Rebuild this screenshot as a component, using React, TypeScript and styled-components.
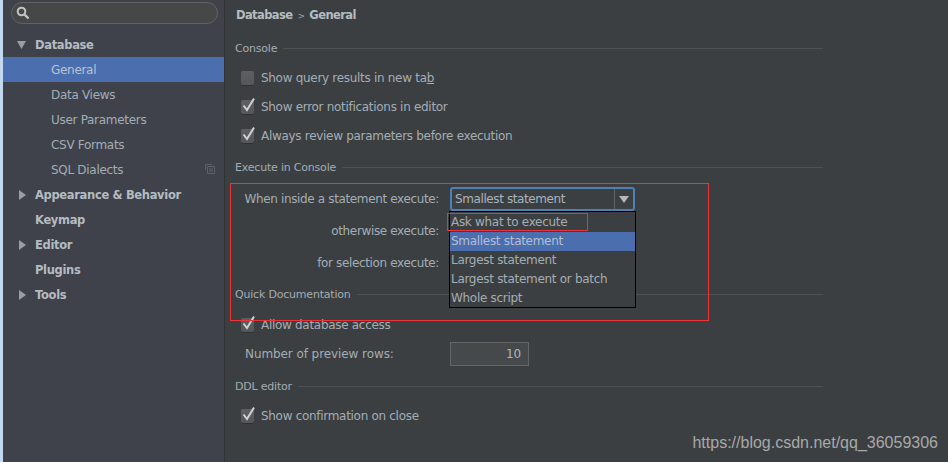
import React from "react";
import styled, { createGlobalStyle } from "styled-components";

const Global = createGlobalStyle`
  html, body { margin: 0; padding: 0; background: #3c3f41; }
  #root { width: 948px; height: 462px; overflow: hidden; }
  * { box-sizing: border-box; }
`;

const Page = styled.div`
  width: 948px; height: 462px; display: flex; position: relative;
  font-family: "DejaVu Sans", Verdana, sans-serif; font-size: 12px; letter-spacing: -0.3px; color: #a9b3bd;
`;
const Strip = styled.div`width: 3px; background: #c4d9f1; flex: none;`;
const Sidebar = styled.aside`
  width: 222px; flex: none; background: #3f424a; border-right: 1px solid #303235;
  padding-top: 2px; display: flex; flex-direction: column;
`;
const SearchBox = styled.div`
  margin: 0 6px 0 8px; height: 22px; border: 1px solid #5f6364; border-radius: 11px;
  background: #454846; display: flex; align-items: center; padding-left: 4px;
`;
const Tree = styled.div`margin-top: 8px; display: flex; flex-direction: column;`;
const TreeRow = styled.div<{ $sel?: boolean; $bold?: boolean; $child?: boolean }>`
  height: 25px; display: flex; align-items: center; position: relative;
  padding-left: ${p => (p.$child ? 48 : 32)}px;
  background: ${p => (p.$sel ? "#4b6eaf" : "transparent")};
  color: ${p => (p.$sel ? "#b9c4d3" : p.$bold ? "#b4bcc2" : "#a3adb6")};
  font-weight: ${p => (p.$bold ? 700 : 400)};
  ${p => p.$bold && "font-size: 11.5px; letter-spacing: -0.33px;"}
`;
const Arrow = styled.svg<{ $left: number }>`position: absolute; left: ${p => p.$left}px; top: 8px;`;
const CopyIcon = styled.svg`position: absolute; right: 9px; top: 7px;`;

const Main = styled.main`flex: 1; padding: 6px 125px 0 10px; background: #3c3f41; display: flex; flex-direction: column;`;
const Crumb = styled.div`
  height: 17px; display: flex; align-items: center; font-weight: 700; font-size: 11.5px; letter-spacing: -0.6px;
  color: #b4bcc2; gap: 5px; margin-left: 1px;
`;
const Sep = styled.span`font-weight: 400; font-size: 9px; color: #9aa3aa; padding-top: 2px;`;
const Section = styled.div<{ $mt: number }>`
  margin-top: ${p => p.$mt}px; height: 18px; display: flex; align-items: center; gap: 6px; color: #a3acb3; font-size: 11px;
  letter-spacing: -0.2px;
  &::after { content: ""; flex: 1; height: 1px; background: #4f5254; }
`;
const CheckRow = styled.div<{ $mt: number }>`
  margin-top: ${p => p.$mt}px; height: 18px; padding-left: 6px; display: flex; align-items: center; gap: 7px; color: #a3adb6;
  u { text-underline-offset: 1px; }
`;
const Box = styled.span`
  width: 13px; height: 14px; flex: none; border-radius: 2px; position: relative;
  background: linear-gradient(#5d5f60, #545657); box-shadow: 0 1px 0 #2f3132;
`;
const Tick = styled.svg`position: absolute; left: 0; top: -3px;`;
const FormRow = styled.div<{ $mt: number }>`
  margin-top: ${p => p.$mt}px; height: 26px; display: grid; grid-template-columns: 204px auto; column-gap: 11px; align-items: center;
`;
const FormLabel = styled.span`text-align: right; color: #a3adb6; white-space: nowrap; letter-spacing: -0.36px;`;
const Combo = styled.div`
  width: 185px; height: 24px; border: 2px solid #4d80b5; border-radius: 3px; display: flex; align-items: center;
  background: #3c3f41; padding-left: 3px; color: #a9b3bd; letter-spacing: -0.4px;
`;
const ComboText = styled.span`flex: 1;`;
const ComboBtn = styled.span`
  width: 19px; height: 100%; border-left: 1px solid #616466; display: flex; align-items: center; justify-content: center;
`;
const Popup = styled.div`
  position: absolute; left: 449px; top: 211px; width: 187px; height: 97px;
  border: 1px solid #000; background: #3c3f41; padding-top: 1px; display: flex; flex-direction: column;
`;
const PopItem = styled.div<{ $sel?: boolean }>`
  height: 19px; padding-left: 1px; line-height: 19px; color: ${p => (p.$sel ? "#b4bfd0" : "#a5adb4")};
  background: ${p => (p.$sel ? "#4b6eaf" : "transparent")};
`;
const RedFrame = styled.div<{ $l: number; $t: number; $w: number; $h: number }>`
  position: absolute; left: ${p => p.$l}px; top: ${p => p.$t}px; width: ${p => p.$w}px; height: ${p => p.$h}px;
  border: 1px solid #ee3338; pointer-events: none;
`;
const NumRow = styled.div`
  margin-top: 8px; height: 24px; padding-left: 10px; display: grid; grid-template-columns: 205px 79px; align-items: center; color: #a3adb6;
  letter-spacing: -0.08px;
`;
const NumInput = styled.div`
  height: 24px; border: 1px solid #646769; background: #45494a; text-align: right; line-height: 22px; padding-right: 7px; color: #aeb5ba;
`;
const Watermark = styled.div`
  position: absolute; right: 10px; top: 434px; font-family: "Liberation Sans", Arial, sans-serif; font-size: 16px; letter-spacing: 0; color: #a7a9aa;
`;

const Check = ({ on }: { on?: boolean }) => (
  <Box>
    {on && (
      <Tick width="15" height="17" viewBox="0 0 15 17">
        <path d="M2.5 8.5 L6 13 L13 1.5" fill="none" stroke="#cfd1d2" strokeWidth="2" />
      </Tick>
    )}
  </Box>
);
const Right = () => (
  <Arrow $left={15} width="9" height="10" viewBox="0 0 9 10"><path d="M1 0 L8 5 L1 10 Z" fill="#9a9ea1" /></Arrow>
);
const Down = () => (
  <Arrow $left={14} width="10" height="9" viewBox="0 0 10 9"><path d="M0 1 H9 L4.5 9 Z" fill="#9a9ea1" /></Arrow>
);

export default function App() {
  return (
    <Page>
      <Global />
      <Strip />
      <Sidebar>
        <SearchBox>
          <svg width="14" height="14" viewBox="0 0 14 14">
            <circle cx="5.5" cy="5.5" r="3.8" fill="none" stroke="#c2c5c6" strokeWidth="2" />
            <path d="M8.5 8.5 L12.5 12.5" stroke="#c2c5c6" strokeWidth="2.4" />
          </svg>
        </SearchBox>
        <Tree>
          <TreeRow $bold><Down />Database</TreeRow>
          <TreeRow $child $sel>General</TreeRow>
          <TreeRow $child>Data Views</TreeRow>
          <TreeRow $child>User Parameters</TreeRow>
          <TreeRow $child>CSV Formats</TreeRow>
          <TreeRow $child>
            SQL Dialects
            <CopyIcon width="10" height="10" viewBox="0 0 10 10">
              <path d="M0.5 6.5 V0.5 H7 M2.5 2.5 H9.5 V9.5 H2.5 Z M4 5 H8 M4 7 H8" fill="none" stroke="#5d6066" />
            </CopyIcon>
          </TreeRow>
          <TreeRow $bold><Right />Appearance &amp; Behavior</TreeRow>
          <TreeRow $bold>Keymap</TreeRow>
          <TreeRow $bold><Right />Editor</TreeRow>
          <TreeRow $bold>Plugins</TreeRow>
          <TreeRow $bold><Right />Tools</TreeRow>
        </Tree>
      </Sidebar>
      <Main>
        <Crumb>Database <Sep>&gt;</Sep> General</Crumb>
        <Section $mt={16}>Console</Section>
        <CheckRow $mt={12}><Check />
          <span>Show query results in new ta<u>b</u></span></CheckRow>
        <CheckRow $mt={11}><Check on />Show error notifications in editor</CheckRow>
        <CheckRow $mt={11}><Check on />Always review parameters before execution</CheckRow>
        <Section $mt={13}>Execute in Console</Section>
        <FormRow $mt={10}>
          <FormLabel>When inside a statement execute:</FormLabel>
          <Combo>
            <ComboText>Smallest statement</ComboText>
            <ComboBtn>
              <svg width="10" height="7" viewBox="0 0 10 7"><path d="M0 0 H10 L5 7 Z" fill="#b5b8ba" /></svg>
            </ComboBtn>
          </Combo>
        </FormRow>
        <FormRow $mt={6}><FormLabel>otherwise execute:</FormLabel><span /></FormRow>
        <FormRow $mt={6}><FormLabel>for selection execute:</FormLabel><span /></FormRow>
        <Section $mt={9}>Quick Documentation</Section>
        <CheckRow $mt={13}><Check on />Allow database access</CheckRow>
        <NumRow><span>Number of preview rows:</span><NumInput>10</NumInput></NumRow>
        <Section $mt={11}>DDL editor</Section>
        <CheckRow $mt={12}><Check on />Show confirmation on close</CheckRow>
      </Main>
      <Popup>
        <PopItem>Ask what to execute</PopItem>
        <PopItem $sel>Smallest statement</PopItem>
        <PopItem>Largest statement</PopItem>
        <PopItem>Largest statement or batch</PopItem>
        <PopItem>Whole script</PopItem>
      </Popup>
      <RedFrame $l={230} $t={183} $w={479} $h={138} />
      <RedFrame $l={447} $t={213} $w={141} $h={18} />
      <Watermark>https://blog.csdn.net/qq_36059306</Watermark>
    </Page>
  );
}
